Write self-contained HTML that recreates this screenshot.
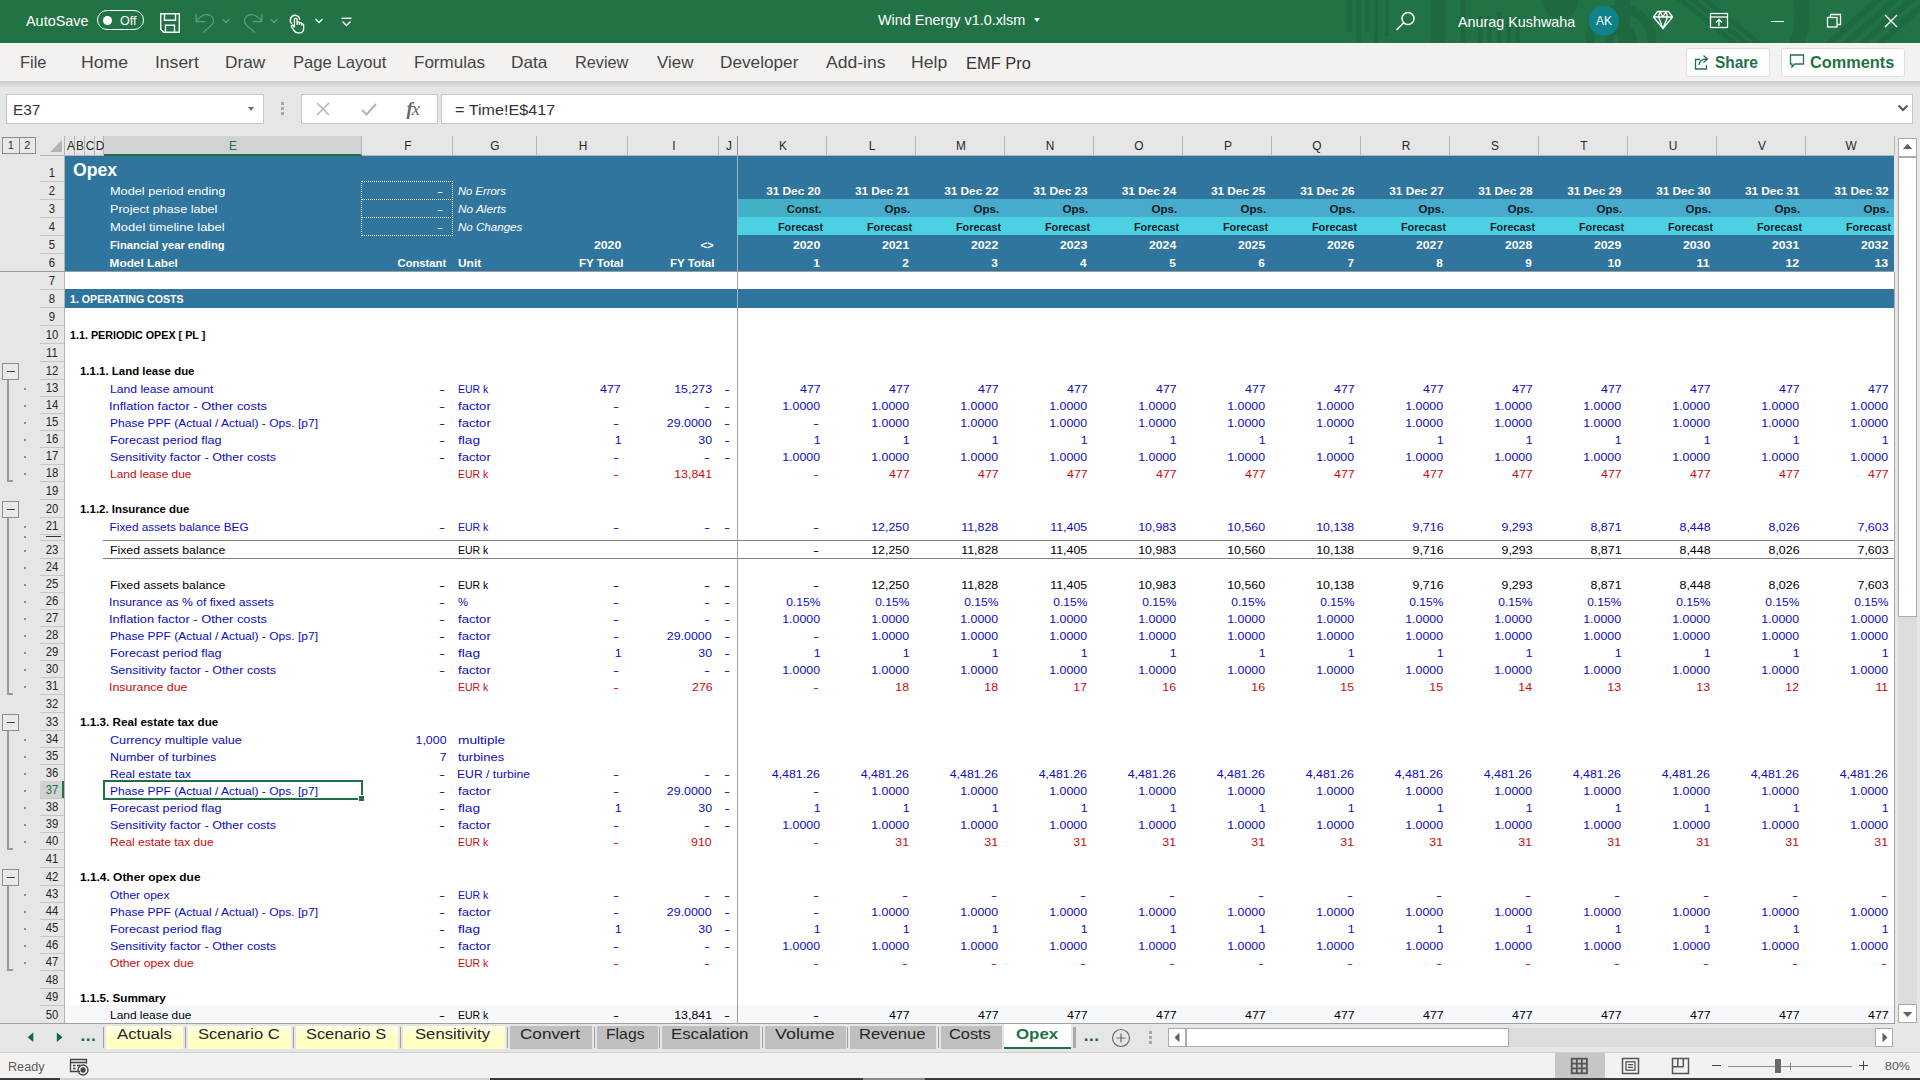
<!DOCTYPE html>
<html lang="en"><head><meta charset="utf-8"><title>Wind Energy v1.0.xlsm - Excel</title>
<style>
*{margin:0;padding:0}
html,body{width:1920px;height:1080px;overflow:hidden;background:#e6e6e6}
body{position:relative;font-family:"Liberation Sans","DejaVu Sans",sans-serif;color:#000}
body div,body span,body svg{position:absolute}
.t{font-size:11.8px;white-space:nowrap;height:17px;line-height:17px;margin-top:1.8px}
.l{transform-origin:0 50%}
.r{transform-origin:100% 50%}
.b{font-weight:bold}
.i{font-style:italic}
.title{font-size:18px;font-weight:bold;height:26px;line-height:26px;margin-top:.5px}
.ui{white-space:nowrap;transform-origin:0 50%}
.ch{top:137px;height:19px;line-height:19px;font-size:12.5px;color:#262626;text-align:center;transform:scaleX(.95)}
.rh{left:40px;width:24px;text-align:center;font-size:12.3px;line-height:17px;color:#262626;overflow:hidden;transform:scaleX(.92)}
.r1{top:156px}.r2{top:181px}.r3{top:199px}.r4{top:217px}.r5{top:235px}.r6{top:253px}.r7{top:271px}.r8{top:289px}.r9{top:307px}.r10{top:325px}.r11{top:343px}.r12{top:361px}.r13{top:379px}.r14{top:396px}.r15{top:413px}.r16{top:430px}.r17{top:447px}.r18{top:464px}.r19{top:481px}.r20{top:499px}.r21{top:517px}.r22{top:534px}.r23{top:540px}.r24{top:558px}.r25{top:575px}.r26{top:592px}.r27{top:609px}.r28{top:626px}.r29{top:643px}.r30{top:660px}.r31{top:677px}.r32{top:694px}.r33{top:712px}.r34{top:730px}.r35{top:747px}.r36{top:764px}.r37{top:781px}.r38{top:798px}.r39{top:815px}.r40{top:832px}.r41{top:849px}.r42{top:867px}.r43{top:885px}.r44{top:902px}.r45{top:919px}.r46{top:936px}.r47{top:953px}.r48{top:970px}.r49{top:988px}.r50{top:1005px}.x89{transform:scaleX(0.89)}.x90{transform:scaleX(0.9)}.x91{transform:scaleX(0.91)}.x92{transform:scaleX(0.92)}.x95{transform:scaleX(0.95)}.x97{transform:scaleX(0.97)}.x98{transform:scaleX(0.98)}.x99{transform:scaleX(0.99)}.x100{transform:scaleX(1)}.x101{transform:scaleX(1.01)}.x102{transform:scaleX(1.02)}.x103{transform:scaleX(1.03)}.x104{transform:scaleX(1.04)}.x105{transform:scaleX(1.05)}.x106{transform:scaleX(1.06)}.x107{transform:scaleX(1.07)}.x108{transform:scaleX(1.08)}.x109{transform:scaleX(1.09)}.x110{transform:scaleX(1.1)}.x111{transform:scaleX(1.11)}.x116{transform:scaleX(1.16)}.x153{transform:scaleX(1.53)}.cb{color:#0c0cc0}.cr{color:#c60c0c}.ck{color:#000}.cw{color:#fff}.cd{color:#0c1c24}
</style></head><body>
<!-- title bar -->
<div id="titlebar" style="left:0;top:0;width:1920px;height:42.5px;background:#217346"></div>
<svg style="left:1330px;top:0" width="590" height="42.5" viewBox="1330 0 590 42.5">
<g fill="#1e6940">
<rect x="1347.300" y="0" width="4.700" height="32"/><rect x="1356.700" y="0" width="4.300" height="42.5"/><rect x="1365" y="0" width="5" height="32"/><rect x="1374" y="0" width="4" height="42.5"/><rect x="1385" y="0" width="3.800" height="36"/>
<rect x="1431" y="0" width="14" height="42.5"/><rect x="1460.500" y="0" width="5" height="42.5"/>
<rect x="1478" y="16" width="4.500" height="26.500"/><rect x="1487" y="16" width="4.500" height="26.500"/><rect x="1497" y="12" width="4.500" height="30.500"/><rect x="1506.500" y="16" width="4.500" height="26.500"/><rect x="1515.500" y="16" width="4.500" height="26.500"/>
<path d="M1543 0a17.500 19 0 0 0 35 0z"/>
</g>
<g fill="none" stroke="#1e6940">
<circle cx="1621" cy="40" r="12" stroke-width="8"/><circle cx="1621" cy="40" r="31" stroke-width="9"/>
<path d="M1676 -4l62 50M1688 -4l62 50M1700 -4l62 50" stroke-width="5"/>
<circle cx="1712" cy="14" r="90" stroke-width="15"/>
<path d="M1826 46l56 -50M1843 46l56 -50M1860 46l56 -50M1877 46l56 -50" stroke-width="6"/>
</g></svg>
<span class="ui" style="left:26.3px;top:10.45px;height:22.5px;line-height:22.5px;font-size:15px;color:#fff;transform:scaleX(0.961);">AutoSave</span>
<div style="left:97px;top:10px;width:47px;height:20px;border:1px solid #fff;border-radius:10.5px;box-sizing:border-box"></div>
<div style="left:102.5px;top:15.5px;width:9px;height:9px;border-radius:5px;background:#fff"></div>
<span class="ui" style="left:120px;top:10.7px;height:20px;line-height:20px;font-size:12.5px;color:#fff">Off</span>
<svg style="left:159px;top:12px" width="22" height="22" viewBox="0 0 22 22" fill="none" stroke="#fff" stroke-width="1.4"><path d="M1.7 1.7h18.6v18.6H4.7l-3-3z"/><path d="M5.5 1.7v6.5h11V1.7"/><path d="M6.5 20.3v-7h9v7"/></svg>
<svg style="left:194px;top:11px" width="22" height="24" viewBox="0 0 22 24" fill="none" stroke="#56a07a" stroke-width="1.300"><path d="M2.200 2.800v7.800h9"/><path d="M2.600 10.200C5 6 10 2.600 15 4c4 1.400 5.400 5 4 8-1.200 2.600-6 6-10 9.400"/></svg>
<svg style="left:221px;top:17px" width="10" height="8" viewBox="0 0 10 8" fill="none" stroke="#56a07a" stroke-width="1.300"><path d="M1.500 2l3.500 3.500L8.500 2"/></svg>
<svg style="left:241.600px;top:11px" width="22" height="24" viewBox="0 0 22 24" fill="none" stroke="#56a07a" stroke-width="1.300"><path d="M19.800 2.800v7.800h-9"/><path d="M19.400 10.200C17 6 12 2.600 7 4c-4 1.400-5.400 5-4 8 1.200 2.600 6 6 10 9.400"/></svg>
<svg style="left:269px;top:17px" width="10" height="8" viewBox="0 0 10 8" fill="none" stroke="#56a07a" stroke-width="1.300"><path d="M1.500 2l3.500 3.500L8.500 2"/></svg>
<svg style="left:287.5px;top:11.5px" width="17.6" height="22.9" viewBox="0 0 20 26" fill="none" stroke="#fff" stroke-width="1.5"><path d="M4.500 13.500C2.800 12 2.200 9.500 3 7.300 4 4.800 6.500 3.300 9 3.800c2.600.5 4.300 2.700 4.300 5.200"/><path d="M7.300 17V8.500c0-2.200 3-2.200 3 0v6.300m0-2.300c0-1.800 2.700-1.800 2.700 0v2.300m0-1.500c0-1.700 2.600-1.500 2.600.2v2m0-1c0-1.500 2.200-1.300 2.200.3v4c0 3-2 5-5 5h-1.500c-2.500 0-3.500-1-4.800-3.200L4 17c-.8-1.600 1.300-2.600 2.200-1.200l1.100 1.800"/></svg>
<svg style="left:314px;top:17px" width="10" height="8" viewBox="0 0 10 8" fill="none" stroke="#fff" stroke-width="1.400"><path d="M1.500 2l3.500 3.500L8.500 2"/></svg>
<svg style="left:340px;top:15px" width="13" height="12" viewBox="0 0 13 12" fill="none" stroke="#fff" stroke-width="1.400"><path d="M1.500 3.300h10"/><path d="M2.500 6.500l4 4 4-4"/></svg>
<span class="ui" style="left:878.18px;top:9.45px;height:22.5px;line-height:22.5px;font-size:15px;color:#fff;transform:scaleX(0.96);">Wind Energy v1.0.xlsm</span>
<div style="left:1034.3px;top:18.2px;width:0;height:0;border-left:3.4px solid transparent;border-right:3.4px solid transparent;border-top:4px solid #fff"></div>
<svg style="left:1395px;top:10px" width="22" height="22" viewBox="0 0 22 22" fill="none" stroke="#fff" stroke-width="1.500"><circle cx="13" cy="8.500" r="6"/><path d="M8.700 12.800L1.500 20"/></svg>
<span class="ui" style="left:1458.3px;top:10.95px;height:22.5px;line-height:22.5px;font-size:15px;color:#fff;transform:scaleX(0.956);">Anurag Kushwaha</span>
<div style="left:1589px;top:6px;width:30px;height:30px;border-radius:15px;background:#0f828c"></div>
<span class="ui" style="left:1589px;top:6px;width:30px;height:30px;line-height:31px;text-align:center;font-size:12px;color:#fff;transform-origin:50% 50%">AK</span>
<svg style="left:1652px;top:9px" width="22" height="22" viewBox="0 0 22 22" fill="none" stroke="#fff" stroke-width="1.300" stroke-linejoin="round"><path d="M5.500 2.500h11l4 5.500-9.500 11.500L1.500 8z"/><path d="M1.500 8h19M8 2.500L6.500 8 11 19.500 15.500 8 14 2.500M8 2.500L11 8l3-5.500"/></svg>
<svg style="left:1709px;top:12px" width="20" height="18" viewBox="0 0 20 18" fill="none" stroke="#fff" stroke-width="1.300"><rect x="1.500" y="1.500" width="17" height="14"/><path d="M1.500 5h17"/><path d="M10 14V8M7 10.500l3-3 3 3"/></svg>
<div style="left:1770.5px;top:20.5px;width:13px;height:1.4px;background:#fff"></div>
<svg style="left:1826px;top:13px" width="16" height="16" viewBox="0 0 16 16" fill="none" stroke="#fff" stroke-width="1.300"><rect x="1.500" y="4.500" width="9.500" height="9.500"/><path d="M4.500 4.500v-3h10v10h-3.500"/></svg>
<svg style="left:1884px;top:14px" width="14" height="14" viewBox="0 0 14 14" fill="none" stroke="#fff" stroke-width="1.400"><path d="M1 1l12 12M13 1L1 13"/></svg>
<!-- ribbon tabs -->
<div style="left:0;top:42.5px;width:1920px;height:38.5px;background:#f3f2f1"></div>
<div style="left:0;top:81px;width:1920px;height:7px;background:linear-gradient(#cdcdcd,#e6e6e6)"></div>
<span class="ui" style="left:19.83px;top:50.3px;height:24.8px;line-height:24.8px;font-size:16.5px;color:#444;transform:scaleX(0.996);">File</span>
<span class="ui" style="left:81.03px;top:50.3px;height:24.8px;line-height:24.8px;font-size:16.5px;color:#444;transform:scaleX(1.071);">Home</span>
<span class="ui" style="left:154.61px;top:50.3px;height:24.8px;line-height:24.8px;font-size:16.5px;color:#444;transform:scaleX(1.062);">Insert</span>
<span class="ui" style="left:224.76px;top:50.3px;height:24.8px;line-height:24.8px;font-size:16.5px;color:#444;transform:scaleX(1.047);">Draw</span>
<span class="ui" style="left:293.11px;top:50.3px;height:24.8px;line-height:24.8px;font-size:16.5px;color:#444;transform:scaleX(1.008);">Page Layout</span>
<span class="ui" style="left:414.08px;top:50.3px;height:24.8px;line-height:24.8px;font-size:16.5px;color:#444;transform:scaleX(1.031);">Formulas</span>
<span class="ui" style="left:510.86px;top:50.3px;height:24.8px;line-height:24.8px;font-size:16.5px;color:#444;transform:scaleX(1.045);">Data</span>
<span class="ui" style="left:574.94px;top:50.3px;height:24.8px;line-height:24.8px;font-size:16.5px;color:#444;transform:scaleX(0.986);">Review</span>
<span class="ui" style="left:656.87px;top:50.3px;height:24.8px;line-height:24.8px;font-size:16.5px;color:#444;transform:scaleX(1.026);">View</span>
<span class="ui" style="left:719.87px;top:50.3px;height:24.8px;line-height:24.8px;font-size:16.5px;color:#444;transform:scaleX(1.042);">Developer</span>
<span class="ui" style="left:826.3px;top:50.3px;height:24.8px;line-height:24.8px;font-size:16.5px;color:#444;transform:scaleX(1.065);">Add-ins</span>
<span class="ui" style="left:910.83px;top:50.3px;height:24.8px;line-height:24.8px;font-size:16.5px;color:#444;transform:scaleX(1.067);">Help</span>
<span class="ui" style="left:965.93px;top:51.1px;height:24.8px;line-height:24.8px;font-size:16.5px;color:#333;transform:scaleX(0.995);">EMF Pro</span>
<div style="left:1685.5px;top:47.5px;width:84px;height:29px;background:#fff;border:1px solid #e1dfdd;border-radius:3px;box-sizing:border-box"></div>
<div style="left:1780.5px;top:47.5px;width:124px;height:29px;background:#fff;border:1px solid #e1dfdd;border-radius:3px;box-sizing:border-box"></div>
<svg style="left:1693px;top:53px" width="18" height="18" viewBox="0 0 18 18" fill="none" stroke="#217346" stroke-width="1.300"><path d="M7 6.500H2.500v9.500h11V12"/><path d="M6 12c.5-4 3.500-6 7.500-6M10.500 2.500L14.500 6l-4 3.500"/></svg>
<span class="ui" style="left:1715.02px;top:50.7px;height:24.0px;line-height:24.0px;font-size:16px;font-weight:bold;color:#217346;transform:scaleX(0.966);">Share</span>
<svg style="left:1789px;top:53px" width="17" height="17" viewBox="0 0 17 17" fill="none" stroke="#217346" stroke-width="1.300"><path d="M1.500 2h13v9h-8.500l-3 3v-3H1.500z"/></svg>
<span class="ui" style="left:1809.66px;top:50.7px;height:24.0px;line-height:24.0px;font-size:16px;font-weight:bold;color:#217346;transform:scaleX(1.02);">Comments</span>
<!-- formula bar -->
<div style="left:6px;top:94px;width:258px;height:30px;background:#fff;border:1px solid #c6c6c6;box-sizing:border-box"></div>
<span class="ui" style="left:12.52px;top:98.65px;height:22.5px;line-height:22.5px;font-size:15px;color:#333;transform:scaleX(1.026);">E37</span>
<div style="left:247.700px;top:107px;width:0;height:0;border-left:3.800px solid transparent;border-right:3.800px solid transparent;border-top:4.500px solid #6e6e6e"></div>
<div style="left:281px;top:102px;width:2.500px;height:2.500px;background:#a6a6a6"></div>
<div style="left:281px;top:107px;width:2.500px;height:2.500px;background:#a6a6a6"></div>
<div style="left:281px;top:112px;width:2.500px;height:2.500px;background:#a6a6a6"></div>
<div style="left:301px;top:94px;width:137px;height:30px;background:#fff;border:1px solid #c6c6c6;box-sizing:border-box"></div>
<svg style="left:315px;top:101px" width="16" height="16" viewBox="0 0 16 16" fill="none" stroke="#b4b4b4" stroke-width="1.500"><path d="M2 2l12 12M14 2L2 14"/></svg>
<svg style="left:360px;top:101px" width="18" height="16" viewBox="0 0 18 16" fill="none" stroke="#b4b4b4" stroke-width="2"><path d="M2 9l4.500 4.500L16 3"/></svg>
<span class="ui" style="left:406.5px;top:94.5px;height:29px;line-height:28px;font-size:18.5px;font-style:italic;font-family:'Liberation Serif','DejaVu Serif',serif;color:#666;letter-spacing:-1px"><b>f</b>x</span>
<div style="left:441px;top:94px;width:1472px;height:30px;background:#fff;border:1px solid #c6c6c6;box-sizing:border-box"></div>
<span class="ui" style="left:455.19px;top:98.65px;height:22.5px;line-height:22.5px;font-size:15px;color:#333;transform:scaleX(1.077);">= Time!E$417</span>
<svg style="left:1897px;top:103px" width="12" height="10" viewBox="0 0 12 10" fill="none" stroke="#555" stroke-width="2"><path d="M1.500 2.500L6 7l4.500-4.500"/></svg>
<!-- grid white -->
<div style="left:65px;top:156px;width:1829px;height:867px;background:#fff"></div>
<div style="left:2px;top:137px;width:17.5px;height:17px;border:1px solid #8c8c8c;box-sizing:border-box;background:#e9e9e9"></div>
<span class="ui" style="left:2px;top:137px;width:17.5px;height:17px;line-height:17.5px;text-align:center;font-size:11px;color:#333;transform-origin:50% 50%">1</span>
<div style="left:18.5px;top:137px;width:17.5px;height:17px;border:1px solid #8c8c8c;box-sizing:border-box;background:#e9e9e9"></div>
<span class="ui" style="left:18.5px;top:137px;width:17.5px;height:17px;line-height:17.5px;text-align:center;font-size:11px;color:#333;transform-origin:50% 50%">2</span>
<div style="left:49.5px;top:140px;width:0;height:0;border-left:12px solid transparent;border-bottom:12px solid #b4b4b4"></div>
<div style="left:40px;top:155px;width:1854px;height:1px;background:#b4b4b4"></div>
<div style="left:74px;top:136px;width:1px;height:19px;background:#b4b4b4"></div>
<span class="ch" style="left:55.5px;width:30px;color:#262626">A</span>
<div style="left:84px;top:136px;width:1px;height:19px;background:#b4b4b4"></div>
<span class="ch" style="left:65.0px;width:30px;color:#262626">B</span>
<div style="left:94px;top:136px;width:1px;height:19px;background:#b4b4b4"></div>
<span class="ch" style="left:75.0px;width:30px;color:#262626">C</span>
<div style="left:103px;top:136px;width:1px;height:19px;background:#b4b4b4"></div>
<span class="ch" style="left:84.5px;width:30px;color:#262626">D</span>
<div style="left:104px;top:136px;width:258px;height:18px;background:#d2d2d2"></div>
<div style="left:104px;top:154px;width:258px;height:2px;background:#217346"></div>
<div style="left:361px;top:136px;width:1px;height:19px;background:#b4b4b4"></div>
<span class="ch" style="left:218.0px;width:30px;color:#217346">E</span>
<div style="left:452px;top:136px;width:1px;height:19px;background:#b4b4b4"></div>
<span class="ch" style="left:392.5px;width:30px;color:#262626">F</span>
<div style="left:536px;top:136px;width:1px;height:19px;background:#b4b4b4"></div>
<span class="ch" style="left:480.0px;width:30px;color:#262626">G</span>
<div style="left:627px;top:136px;width:1px;height:19px;background:#b4b4b4"></div>
<span class="ch" style="left:567.5px;width:30px;color:#262626">H</span>
<div style="left:718px;top:136px;width:1px;height:19px;background:#b4b4b4"></div>
<span class="ch" style="left:658.5px;width:30px;color:#262626">I</span>
<div style="left:737px;top:136px;width:1px;height:19px;background:#8c8c8c"></div>
<span class="ch" style="left:713.5px;width:30px;color:#262626">J</span>
<div style="left:826px;top:136px;width:1px;height:19px;background:#b4b4b4"></div>
<span class="ch" style="left:767.5px;width:30px;color:#262626">K</span>
<div style="left:915px;top:136px;width:1px;height:19px;background:#b4b4b4"></div>
<span class="ch" style="left:856.5px;width:30px;color:#262626">L</span>
<div style="left:1004px;top:136px;width:1px;height:19px;background:#b4b4b4"></div>
<span class="ch" style="left:945.5px;width:30px;color:#262626">M</span>
<div style="left:1093px;top:136px;width:1px;height:19px;background:#b4b4b4"></div>
<span class="ch" style="left:1034.5px;width:30px;color:#262626">N</span>
<div style="left:1182px;top:136px;width:1px;height:19px;background:#b4b4b4"></div>
<span class="ch" style="left:1123.5px;width:30px;color:#262626">O</span>
<div style="left:1271px;top:136px;width:1px;height:19px;background:#b4b4b4"></div>
<span class="ch" style="left:1212.5px;width:30px;color:#262626">P</span>
<div style="left:1360px;top:136px;width:1px;height:19px;background:#b4b4b4"></div>
<span class="ch" style="left:1301.5px;width:30px;color:#262626">Q</span>
<div style="left:1449px;top:136px;width:1px;height:19px;background:#b4b4b4"></div>
<span class="ch" style="left:1390.5px;width:30px;color:#262626">R</span>
<div style="left:1538px;top:136px;width:1px;height:19px;background:#b4b4b4"></div>
<span class="ch" style="left:1479.5px;width:30px;color:#262626">S</span>
<div style="left:1627px;top:136px;width:1px;height:19px;background:#b4b4b4"></div>
<span class="ch" style="left:1568.5px;width:30px;color:#262626">T</span>
<div style="left:1716px;top:136px;width:1px;height:19px;background:#b4b4b4"></div>
<span class="ch" style="left:1657.5px;width:30px;color:#262626">U</span>
<div style="left:1805px;top:136px;width:1px;height:19px;background:#b4b4b4"></div>
<span class="ch" style="left:1746.5px;width:30px;color:#262626">V</span>
<div style="left:1894px;top:136px;width:1px;height:19px;background:#b4b4b4"></div>
<span class="ch" style="left:1835.5px;width:30px;color:#262626">W</span>
<div style="left:64px;top:136px;width:1px;height:19px;background:#b4b4b4"></div>
<div style="left:64px;top:156px;width:1px;height:867px;background:#b4b4b4"></div>
<div style="left:40px;top:181px;width:24px;height:1px;background:#c6c6c6"></div>
<span class="rh" style="top:164.7px;height:17px;color:#262626">1</span>
<div style="left:40px;top:199px;width:24px;height:1px;background:#c6c6c6"></div>
<span class="rh" style="top:182.7px;height:17px;color:#262626">2</span>
<div style="left:40px;top:217px;width:24px;height:1px;background:#c6c6c6"></div>
<span class="rh" style="top:200.7px;height:17px;color:#262626">3</span>
<div style="left:40px;top:235px;width:24px;height:1px;background:#c6c6c6"></div>
<span class="rh" style="top:218.7px;height:17px;color:#262626">4</span>
<div style="left:40px;top:253px;width:24px;height:1px;background:#c6c6c6"></div>
<span class="rh" style="top:236.7px;height:17px;color:#262626">5</span>
<div style="left:40px;top:271px;width:24px;height:1px;background:#c6c6c6"></div>
<span class="rh" style="top:254.7px;height:17px;color:#262626">6</span>
<div style="left:40px;top:289px;width:24px;height:1px;background:#c6c6c6"></div>
<span class="rh" style="top:272.7px;height:17px;color:#262626">7</span>
<div style="left:40px;top:307px;width:24px;height:1px;background:#c6c6c6"></div>
<span class="rh" style="top:290.7px;height:17px;color:#262626">8</span>
<div style="left:40px;top:325px;width:24px;height:1px;background:#c6c6c6"></div>
<span class="rh" style="top:308.7px;height:17px;color:#262626">9</span>
<div style="left:40px;top:343px;width:24px;height:1px;background:#c6c6c6"></div>
<span class="rh" style="top:326.7px;height:17px;color:#262626">10</span>
<div style="left:40px;top:361px;width:24px;height:1px;background:#c6c6c6"></div>
<span class="rh" style="top:344.7px;height:17px;color:#262626">11</span>
<div style="left:40px;top:379px;width:24px;height:1px;background:#c6c6c6"></div>
<span class="rh" style="top:362.7px;height:17px;color:#262626">12</span>
<div style="left:40px;top:396px;width:24px;height:1px;background:#c6c6c6"></div>
<span class="rh" style="top:379.7px;height:17px;color:#262626">13</span>
<div style="left:40px;top:413px;width:24px;height:1px;background:#c6c6c6"></div>
<span class="rh" style="top:396.7px;height:17px;color:#262626">14</span>
<div style="left:40px;top:430px;width:24px;height:1px;background:#c6c6c6"></div>
<span class="rh" style="top:413.7px;height:17px;color:#262626">15</span>
<div style="left:40px;top:447px;width:24px;height:1px;background:#c6c6c6"></div>
<span class="rh" style="top:430.7px;height:17px;color:#262626">16</span>
<div style="left:40px;top:464px;width:24px;height:1px;background:#c6c6c6"></div>
<span class="rh" style="top:447.7px;height:17px;color:#262626">17</span>
<div style="left:40px;top:481px;width:24px;height:1px;background:#c6c6c6"></div>
<span class="rh" style="top:464.7px;height:17px;color:#262626">18</span>
<div style="left:40px;top:499px;width:24px;height:1px;background:#c6c6c6"></div>
<span class="rh" style="top:482.7px;height:17px;color:#262626">19</span>
<div style="left:40px;top:517px;width:24px;height:1px;background:#c6c6c6"></div>
<span class="rh" style="top:500.7px;height:17px;color:#262626">20</span>
<div style="left:40px;top:534px;width:24px;height:1px;background:#c6c6c6"></div>
<span class="rh" style="top:517.7px;height:17px;color:#262626">21</span>
<div style="left:40px;top:540px;width:24px;height:1px;background:#c6c6c6"></div>
<div style="left:46px;top:535.5px;width:15px;height:1.5px;background:#333"></div>
<div style="left:40px;top:558px;width:24px;height:1px;background:#c6c6c6"></div>
<span class="rh" style="top:541.7px;height:17px;color:#262626">23</span>
<div style="left:40px;top:575px;width:24px;height:1px;background:#c6c6c6"></div>
<span class="rh" style="top:558.7px;height:17px;color:#262626">24</span>
<div style="left:40px;top:592px;width:24px;height:1px;background:#c6c6c6"></div>
<span class="rh" style="top:575.7px;height:17px;color:#262626">25</span>
<div style="left:40px;top:609px;width:24px;height:1px;background:#c6c6c6"></div>
<span class="rh" style="top:592.7px;height:17px;color:#262626">26</span>
<div style="left:40px;top:626px;width:24px;height:1px;background:#c6c6c6"></div>
<span class="rh" style="top:609.7px;height:17px;color:#262626">27</span>
<div style="left:40px;top:643px;width:24px;height:1px;background:#c6c6c6"></div>
<span class="rh" style="top:626.7px;height:17px;color:#262626">28</span>
<div style="left:40px;top:660px;width:24px;height:1px;background:#c6c6c6"></div>
<span class="rh" style="top:643.7px;height:17px;color:#262626">29</span>
<div style="left:40px;top:677px;width:24px;height:1px;background:#c6c6c6"></div>
<span class="rh" style="top:660.7px;height:17px;color:#262626">30</span>
<div style="left:40px;top:694px;width:24px;height:1px;background:#c6c6c6"></div>
<span class="rh" style="top:677.7px;height:17px;color:#262626">31</span>
<div style="left:40px;top:712px;width:24px;height:1px;background:#c6c6c6"></div>
<span class="rh" style="top:695.7px;height:17px;color:#262626">32</span>
<div style="left:40px;top:730px;width:24px;height:1px;background:#c6c6c6"></div>
<span class="rh" style="top:713.7px;height:17px;color:#262626">33</span>
<div style="left:40px;top:747px;width:24px;height:1px;background:#c6c6c6"></div>
<span class="rh" style="top:730.7px;height:17px;color:#262626">34</span>
<div style="left:40px;top:764px;width:24px;height:1px;background:#c6c6c6"></div>
<span class="rh" style="top:747.7px;height:17px;color:#262626">35</span>
<div style="left:40px;top:781px;width:24px;height:1px;background:#c6c6c6"></div>
<span class="rh" style="top:764.7px;height:17px;color:#262626">36</span>
<div style="left:40px;top:781px;width:22px;height:17px;background:#d2d2d2"></div>
<div style="left:62px;top:781px;width:2px;height:18px;background:#217346"></div>
<div style="left:40px;top:798px;width:24px;height:1px;background:#c6c6c6"></div>
<span class="rh" style="top:781.7px;height:17px;color:#217346">37</span>
<div style="left:40px;top:815px;width:24px;height:1px;background:#c6c6c6"></div>
<span class="rh" style="top:798.7px;height:17px;color:#262626">38</span>
<div style="left:40px;top:832px;width:24px;height:1px;background:#c6c6c6"></div>
<span class="rh" style="top:815.7px;height:17px;color:#262626">39</span>
<div style="left:40px;top:849px;width:24px;height:1px;background:#c6c6c6"></div>
<span class="rh" style="top:832.7px;height:17px;color:#262626">40</span>
<div style="left:40px;top:867px;width:24px;height:1px;background:#c6c6c6"></div>
<span class="rh" style="top:850.7px;height:17px;color:#262626">41</span>
<div style="left:40px;top:885px;width:24px;height:1px;background:#c6c6c6"></div>
<span class="rh" style="top:868.7px;height:17px;color:#262626">42</span>
<div style="left:40px;top:902px;width:24px;height:1px;background:#c6c6c6"></div>
<span class="rh" style="top:885.7px;height:17px;color:#262626">43</span>
<div style="left:40px;top:919px;width:24px;height:1px;background:#c6c6c6"></div>
<span class="rh" style="top:902.7px;height:17px;color:#262626">44</span>
<div style="left:40px;top:936px;width:24px;height:1px;background:#c6c6c6"></div>
<span class="rh" style="top:919.7px;height:17px;color:#262626">45</span>
<div style="left:40px;top:953px;width:24px;height:1px;background:#c6c6c6"></div>
<span class="rh" style="top:936.7px;height:17px;color:#262626">46</span>
<div style="left:40px;top:970px;width:24px;height:1px;background:#c6c6c6"></div>
<span class="rh" style="top:953.7px;height:17px;color:#262626">47</span>
<div style="left:40px;top:988px;width:24px;height:1px;background:#c6c6c6"></div>
<span class="rh" style="top:971.7px;height:17px;color:#262626">48</span>
<div style="left:40px;top:1005px;width:24px;height:1px;background:#c6c6c6"></div>
<span class="rh" style="top:988.7px;height:17px;color:#262626">49</span>
<span class="rh" style="top:1006.7px;height:16.299999999999955px;color:#262626">50</span>
<div style="left:6.7px;top:379px;width:2px;height:102.5px;background:#9a9a9a"></div>
<div style="left:6.7px;top:479.5px;width:6.5px;height:2px;background:#9a9a9a"></div>
<div style="left:2px;top:363.2px;width:17px;height:16.5px;border:1px solid #8c8c8c;box-sizing:border-box;background:#e9e9e9"></div>
<div style="left:6.5px;top:370.9px;width:8.5px;height:1.6px;background:#444"></div>
<div style="left:24px;top:387.5px;width:2px;height:2px;background:#8c8c8c"></div>
<div style="left:24px;top:404.5px;width:2px;height:2px;background:#8c8c8c"></div>
<div style="left:24px;top:421.5px;width:2px;height:2px;background:#8c8c8c"></div>
<div style="left:24px;top:438.5px;width:2px;height:2px;background:#8c8c8c"></div>
<div style="left:24px;top:455.5px;width:2px;height:2px;background:#8c8c8c"></div>
<div style="left:24px;top:472.5px;width:2px;height:2px;background:#8c8c8c"></div>
<div style="left:6.7px;top:517px;width:2px;height:177.5px;background:#9a9a9a"></div>
<div style="left:6.7px;top:692.5px;width:6.5px;height:2px;background:#9a9a9a"></div>
<div style="left:2px;top:501.2px;width:17px;height:16.5px;border:1px solid #8c8c8c;box-sizing:border-box;background:#e9e9e9"></div>
<div style="left:6.5px;top:508.9px;width:8.5px;height:1.6px;background:#444"></div>
<div style="left:24px;top:525.5px;width:2px;height:2px;background:#8c8c8c"></div>
<div style="left:24px;top:536px;width:2px;height:2px;background:#8c8c8c"></div>
<div style="left:24px;top:549.5px;width:2px;height:2px;background:#8c8c8c"></div>
<div style="left:24px;top:566.5px;width:2px;height:2px;background:#8c8c8c"></div>
<div style="left:24px;top:583.5px;width:2px;height:2px;background:#8c8c8c"></div>
<div style="left:24px;top:600.5px;width:2px;height:2px;background:#8c8c8c"></div>
<div style="left:24px;top:617.5px;width:2px;height:2px;background:#8c8c8c"></div>
<div style="left:24px;top:634.5px;width:2px;height:2px;background:#8c8c8c"></div>
<div style="left:24px;top:651.5px;width:2px;height:2px;background:#8c8c8c"></div>
<div style="left:24px;top:668.5px;width:2px;height:2px;background:#8c8c8c"></div>
<div style="left:24px;top:685.5px;width:2px;height:2px;background:#8c8c8c"></div>
<div style="left:6.7px;top:730px;width:2px;height:119.5px;background:#9a9a9a"></div>
<div style="left:6.7px;top:847.5px;width:6.5px;height:2px;background:#9a9a9a"></div>
<div style="left:2px;top:714.2px;width:17px;height:16.5px;border:1px solid #8c8c8c;box-sizing:border-box;background:#e9e9e9"></div>
<div style="left:6.5px;top:721.9px;width:8.5px;height:1.6px;background:#444"></div>
<div style="left:24px;top:738.5px;width:2px;height:2px;background:#8c8c8c"></div>
<div style="left:24px;top:755.5px;width:2px;height:2px;background:#8c8c8c"></div>
<div style="left:24px;top:772.5px;width:2px;height:2px;background:#8c8c8c"></div>
<div style="left:24px;top:789.5px;width:2px;height:2px;background:#8c8c8c"></div>
<div style="left:24px;top:806.5px;width:2px;height:2px;background:#8c8c8c"></div>
<div style="left:24px;top:823.5px;width:2px;height:2px;background:#8c8c8c"></div>
<div style="left:24px;top:840.5px;width:2px;height:2px;background:#8c8c8c"></div>
<div style="left:6.7px;top:885px;width:2px;height:85.5px;background:#9a9a9a"></div>
<div style="left:6.7px;top:968.5px;width:6.5px;height:2px;background:#9a9a9a"></div>
<div style="left:2px;top:869.2px;width:17px;height:16.5px;border:1px solid #8c8c8c;box-sizing:border-box;background:#e9e9e9"></div>
<div style="left:6.5px;top:876.9px;width:8.5px;height:1.6px;background:#444"></div>
<div style="left:24px;top:893.5px;width:2px;height:2px;background:#8c8c8c"></div>
<div style="left:24px;top:910.5px;width:2px;height:2px;background:#8c8c8c"></div>
<div style="left:24px;top:927.5px;width:2px;height:2px;background:#8c8c8c"></div>
<div style="left:24px;top:944.5px;width:2px;height:2px;background:#8c8c8c"></div>
<div style="left:24px;top:961.5px;width:2px;height:2px;background:#8c8c8c"></div>
<div style="left:65px;top:156px;width:1829px;height:116px;background:#2f759e;"></div>
<div style="left:65px;top:289px;width:1829px;height:19px;background:#2f759e;"></div>
<div style="left:737px;top:199px;width:89px;height:18px;background:#43b1c5;"></div>
<div style="left:826px;top:199px;width:1068px;height:18px;background:#46abcc;"></div>
<div style="left:737px;top:217px;width:1157px;height:18px;background:#4cd1e4;"></div>
<div style="left:65px;top:1005px;width:1829px;height:18px;background:#f7f8fc;"></div>
<span class="t l r1 cw title x98" style="left:72.9px">Opex</span>
<span class="t l r2 cw x108" style="left:109.5px">Model period ending</span>
<span class="t r r2 cw x153" style="right:1476.9px">-</span>
<span class="t l r2 cw i x95" style="left:458.0px">No Errors</span>
<span class="t l r3 cw x107" style="left:109.5px">Project phase label</span>
<span class="t r r3 cw x153" style="right:1476.9px">-</span>
<span class="t l r3 cw i x100" style="left:458.0px">No Alerts</span>
<span class="t l r4 cw x110" style="left:109.5px">Model timeline label</span>
<span class="t r r4 cw x153" style="right:1476.9px">-</span>
<span class="t l r4 cw i x98" style="left:458.0px">No Changes</span>
<span class="t l r5 cw b x95" style="left:109.7px">Financial year ending</span>
<span class="t r r5 cw b x104" style="right:1298.9px">2020</span>
<span class="t r r5 cw b x97" style="right:1206.3px">&lt;&gt;</span>
<span class="t l r6 cw b x100" style="left:109.6px">Model Label</span>
<span class="t r r6 cw b x95" style="right:1473.4px">Constant</span>
<span class="t l r6 cw b x101" style="left:457.6px">Unit</span>
<span class="t r r6 cw b x98" style="right:1296.9px">FY Total</span>
<span class="t r r6 cw b x98" style="right:1205.8px">FY Total</span>
<span class="t r r2 cw b x100" style="right:1099.4px">31 Dec 20</span>
<span class="t r r3 cd b x95" style="right:1098.2px">Const.</span>
<span class="t r r4 cd b x92" style="right:1096.8px">Forecast</span>
<span class="t r r5 cw b x104" style="right:1099.5px">2020</span>
<span class="t r r6 cw b x100" style="right:1100.3px">1</span>
<span class="t r r2 cw b x100" style="right:1010.6px">31 Dec 21</span>
<span class="t r r3 cd b x98" style="right:1009.3px">Ops.</span>
<span class="t r r4 cd b x92" style="right:1007.8px">Forecast</span>
<span class="t r r5 cw b x104" style="right:1010.6px">2021</span>
<span class="t r r6 cw b x100" style="right:1011.2px">2</span>
<span class="t r r2 cw b x100" style="right:921.4px">31 Dec 22</span>
<span class="t r r3 cd b x98" style="right:920.3px">Ops.</span>
<span class="t r r4 cd b x92" style="right:918.8px">Forecast</span>
<span class="t r r5 cw b x104" style="right:921.5px">2022</span>
<span class="t r r6 cw b x100" style="right:922.2px">3</span>
<span class="t r r2 cw b x100" style="right:832.4px">31 Dec 23</span>
<span class="t r r3 cd b x98" style="right:831.3px">Ops.</span>
<span class="t r r4 cd b x92" style="right:829.8px">Forecast</span>
<span class="t r r5 cw b x104" style="right:832.5px">2023</span>
<span class="t r r6 cw b x100" style="right:833.5px">4</span>
<span class="t r r2 cw b x100" style="right:743.8px">31 Dec 24</span>
<span class="t r r3 cd b x98" style="right:742.3px">Ops.</span>
<span class="t r r4 cd b x92" style="right:740.8px">Forecast</span>
<span class="t r r5 cw b x104" style="right:743.9px">2024</span>
<span class="t r r6 cw b x100" style="right:744.3px">5</span>
<span class="t r r2 cw b x100" style="right:654.6px">31 Dec 25</span>
<span class="t r r3 cd b x98" style="right:653.3px">Ops.</span>
<span class="t r r4 cd b x92" style="right:651.8px">Forecast</span>
<span class="t r r5 cw b x104" style="right:654.6px">2025</span>
<span class="t r r6 cw b x100" style="right:655.2px">6</span>
<span class="t r r2 cw b x100" style="right:565.4px">31 Dec 26</span>
<span class="t r r3 cd b x98" style="right:564.3px">Ops.</span>
<span class="t r r4 cd b x92" style="right:562.8px">Forecast</span>
<span class="t r r5 cw b x104" style="right:565.5px">2026</span>
<span class="t r r6 cw b x100" style="right:566.0px">7</span>
<span class="t r r2 cw b x100" style="right:476.3px">31 Dec 27</span>
<span class="t r r3 cd b x98" style="right:475.3px">Ops.</span>
<span class="t r r4 cd b x92" style="right:473.8px">Forecast</span>
<span class="t r r5 cw b x104" style="right:476.4px">2027</span>
<span class="t r r6 cw b x100" style="right:477.2px">8</span>
<span class="t r r2 cw b x100" style="right:387.4px">31 Dec 28</span>
<span class="t r r3 cd b x98" style="right:386.3px">Ops.</span>
<span class="t r r4 cd b x92" style="right:384.8px">Forecast</span>
<span class="t r r5 cw b x104" style="right:387.5px">2028</span>
<span class="t r r6 cw b x100" style="right:388.2px">9</span>
<span class="t r r2 cw b x100" style="right:298.4px">31 Dec 29</span>
<span class="t r r3 cd b x98" style="right:297.3px">Ops.</span>
<span class="t r r4 cd b x92" style="right:295.8px">Forecast</span>
<span class="t r r5 cw b x104" style="right:298.5px">2029</span>
<span class="t r r6 cw b x104" style="right:299.2px">10</span>
<span class="t r r2 cw b x100" style="right:209.4px">31 Dec 30</span>
<span class="t r r3 cd b x98" style="right:208.3px">Ops.</span>
<span class="t r r4 cd b x92" style="right:206.8px">Forecast</span>
<span class="t r r5 cw b x104" style="right:209.5px">2030</span>
<span class="t r r6 cw b x104" style="right:210.2px">11</span>
<span class="t r r2 cw b x100" style="right:120.6px">31 Dec 31</span>
<span class="t r r3 cd b x98" style="right:119.3px">Ops.</span>
<span class="t r r4 cd b x92" style="right:117.8px">Forecast</span>
<span class="t r r5 cw b x104" style="right:120.6px">2031</span>
<span class="t r r6 cw b x104" style="right:121.2px">12</span>
<span class="t r r2 cw b x100" style="right:31.4px">31 Dec 32</span>
<span class="t r r3 cd b x98" style="right:30.3px">Ops.</span>
<span class="t r r4 cd b x92" style="right:28.8px">Forecast</span>
<span class="t r r5 cw b x104" style="right:31.5px">2032</span>
<span class="t r r6 cw b x104" style="right:32.2px">13</span>
<span class="t l r8 cw b x90" style="left:69.9px">1. OPERATING COSTS</span>
<span class="t l r10 ck b x91" style="left:69.9px">1.1. PERIODIC OPEX [ PL ]</span>
<span class="t l r12 ck b x97" style="left:79.8px">1.1.1. Land lease due</span>
<span class="t l r13 cb x103" style="left:109.6px">Land lease amount</span>
<span class="t r r13 cb x153" style="right:1475.5px">-</span>
<span class="t l r13 cb x89" style="left:457.5px">EUR k</span>
<span class="t r r13 cb x105" style="right:1298.9px">477</span>
<span class="t r r13 cb x105" style="right:1207.8px">15,273</span>
<span class="t r r13 cb x153" style="right:1190.4px">-</span>
<span class="t r r13 cb x105" style="right:1099.6px">477</span>
<span class="t r r13 cb x105" style="right:1010.6px">477</span>
<span class="t r r13 cb x105" style="right:921.6px">477</span>
<span class="t r r13 cb x105" style="right:832.6px">477</span>
<span class="t r r13 cb x105" style="right:743.6px">477</span>
<span class="t r r13 cb x105" style="right:654.6px">477</span>
<span class="t r r13 cb x105" style="right:565.6px">477</span>
<span class="t r r13 cb x105" style="right:476.6px">477</span>
<span class="t r r13 cb x105" style="right:387.6px">477</span>
<span class="t r r13 cb x105" style="right:298.6px">477</span>
<span class="t r r13 cb x105" style="right:209.6px">477</span>
<span class="t r r13 cb x105" style="right:120.6px">477</span>
<span class="t r r13 cb x105" style="right:31.6px">477</span>
<span class="t l r14 cb x109" style="left:109.4px">Inflation factor - Other costs</span>
<span class="t r r14 cb x153" style="right:1475.5px">-</span>
<span class="t l r14 cb x111" style="left:458.3px">factor</span>
<span class="t r r14 cb x153" style="right:1300.8px">-</span>
<span class="t r r14 cb x153" style="right:1209.8px">-</span>
<span class="t r r14 cb x153" style="right:1190.4px">-</span>
<span class="t r r14 cb x105" style="right:1099.7px">1.0000</span>
<span class="t r r14 cb x105" style="right:1010.7px">1.0000</span>
<span class="t r r14 cb x105" style="right:921.7px">1.0000</span>
<span class="t r r14 cb x105" style="right:832.7px">1.0000</span>
<span class="t r r14 cb x105" style="right:743.7px">1.0000</span>
<span class="t r r14 cb x105" style="right:654.7px">1.0000</span>
<span class="t r r14 cb x105" style="right:565.7px">1.0000</span>
<span class="t r r14 cb x105" style="right:476.7px">1.0000</span>
<span class="t r r14 cb x105" style="right:387.7px">1.0000</span>
<span class="t r r14 cb x105" style="right:298.7px">1.0000</span>
<span class="t r r14 cb x105" style="right:209.7px">1.0000</span>
<span class="t r r14 cb x105" style="right:120.7px">1.0000</span>
<span class="t r r14 cb x105" style="right:31.7px">1.0000</span>
<span class="t l r15 cb x102" style="left:109.6px">Phase PPF (Actual / Actual) - Ops. [p7]</span>
<span class="t r r15 cb x153" style="right:1475.5px">-</span>
<span class="t l r15 cb x111" style="left:458.3px">factor</span>
<span class="t r r15 cb x153" style="right:1300.8px">-</span>
<span class="t r r15 cb x105" style="right:1208.0px">29.0000</span>
<span class="t r r15 cb x153" style="right:1190.4px">-</span>
<span class="t r r15 cb x153" style="right:1101.0px">-</span>
<span class="t r r15 cb x105" style="right:1010.7px">1.0000</span>
<span class="t r r15 cb x105" style="right:921.7px">1.0000</span>
<span class="t r r15 cb x105" style="right:832.7px">1.0000</span>
<span class="t r r15 cb x105" style="right:743.7px">1.0000</span>
<span class="t r r15 cb x105" style="right:654.7px">1.0000</span>
<span class="t r r15 cb x105" style="right:565.7px">1.0000</span>
<span class="t r r15 cb x105" style="right:476.7px">1.0000</span>
<span class="t r r15 cb x105" style="right:387.7px">1.0000</span>
<span class="t r r15 cb x105" style="right:298.7px">1.0000</span>
<span class="t r r15 cb x105" style="right:209.7px">1.0000</span>
<span class="t r r15 cb x105" style="right:120.7px">1.0000</span>
<span class="t r r15 cb x105" style="right:31.7px">1.0000</span>
<span class="t l r16 cb x107" style="left:109.5px">Forecast period flag</span>
<span class="t r r16 cb x153" style="right:1475.5px">-</span>
<span class="t l r16 cb x116" style="left:458.3px">flag</span>
<span class="t r r16 cb x105" style="right:1298.9px">1</span>
<span class="t r r16 cb x105" style="right:1208.0px">30</span>
<span class="t r r16 cb x153" style="right:1190.4px">-</span>
<span class="t r r16 cb x105" style="right:1099.6px">1</span>
<span class="t r r16 cb x105" style="right:1010.6px">1</span>
<span class="t r r16 cb x105" style="right:921.6px">1</span>
<span class="t r r16 cb x105" style="right:832.6px">1</span>
<span class="t r r16 cb x105" style="right:743.6px">1</span>
<span class="t r r16 cb x105" style="right:654.6px">1</span>
<span class="t r r16 cb x105" style="right:565.6px">1</span>
<span class="t r r16 cb x105" style="right:476.6px">1</span>
<span class="t r r16 cb x105" style="right:387.6px">1</span>
<span class="t r r16 cb x105" style="right:298.6px">1</span>
<span class="t r r16 cb x105" style="right:209.6px">1</span>
<span class="t r r16 cb x105" style="right:120.6px">1</span>
<span class="t r r16 cb x105" style="right:31.6px">1</span>
<span class="t l r17 cb x106" style="left:110.1px">Sensitivity factor - Other costs</span>
<span class="t r r17 cb x153" style="right:1475.5px">-</span>
<span class="t l r17 cb x111" style="left:458.3px">factor</span>
<span class="t r r17 cb x153" style="right:1300.8px">-</span>
<span class="t r r17 cb x153" style="right:1209.8px">-</span>
<span class="t r r17 cb x153" style="right:1190.4px">-</span>
<span class="t r r17 cb x105" style="right:1099.7px">1.0000</span>
<span class="t r r17 cb x105" style="right:1010.7px">1.0000</span>
<span class="t r r17 cb x105" style="right:921.7px">1.0000</span>
<span class="t r r17 cb x105" style="right:832.7px">1.0000</span>
<span class="t r r17 cb x105" style="right:743.7px">1.0000</span>
<span class="t r r17 cb x105" style="right:654.7px">1.0000</span>
<span class="t r r17 cb x105" style="right:565.7px">1.0000</span>
<span class="t r r17 cb x105" style="right:476.7px">1.0000</span>
<span class="t r r17 cb x105" style="right:387.7px">1.0000</span>
<span class="t r r17 cb x105" style="right:298.7px">1.0000</span>
<span class="t r r17 cb x105" style="right:209.7px">1.0000</span>
<span class="t r r17 cb x105" style="right:120.7px">1.0000</span>
<span class="t r r17 cb x105" style="right:31.7px">1.0000</span>
<span class="t l r18 cr x101" style="left:109.6px">Land lease due</span>
<span class="t l r18 cr x89" style="left:457.5px">EUR k</span>
<span class="t r r18 cr x153" style="right:1300.8px">-</span>
<span class="t r r18 cr x105" style="right:1207.8px">13,841</span>
<span class="t r r18 cr x153" style="right:1101.0px">-</span>
<span class="t r r18 cr x105" style="right:1010.6px">477</span>
<span class="t r r18 cr x105" style="right:921.6px">477</span>
<span class="t r r18 cr x105" style="right:832.6px">477</span>
<span class="t r r18 cr x105" style="right:743.6px">477</span>
<span class="t r r18 cr x105" style="right:654.6px">477</span>
<span class="t r r18 cr x105" style="right:565.6px">477</span>
<span class="t r r18 cr x105" style="right:476.6px">477</span>
<span class="t r r18 cr x105" style="right:387.6px">477</span>
<span class="t r r18 cr x105" style="right:298.6px">477</span>
<span class="t r r18 cr x105" style="right:209.6px">477</span>
<span class="t r r18 cr x105" style="right:120.6px">477</span>
<span class="t r r18 cr x105" style="right:31.6px">477</span>
<span class="t l r20 ck b x97" style="left:79.8px">1.1.2. Insurance due</span>
<span class="t l r21 cb x100" style="left:109.6px">Fixed assets balance BEG</span>
<span class="t r r21 cb x153" style="right:1475.5px">-</span>
<span class="t l r21 cb x89" style="left:457.5px">EUR k</span>
<span class="t r r21 cb x153" style="right:1300.8px">-</span>
<span class="t r r21 cb x153" style="right:1209.8px">-</span>
<span class="t r r21 cb x153" style="right:1190.4px">-</span>
<span class="t r r21 cb x153" style="right:1101.0px">-</span>
<span class="t r r21 cb x105" style="right:1010.7px">12,250</span>
<span class="t r r21 cb x105" style="right:921.6px">11,828</span>
<span class="t r r21 cb x105" style="right:832.6px">11,405</span>
<span class="t r r21 cb x105" style="right:743.6px">10,983</span>
<span class="t r r21 cb x105" style="right:654.7px">10,560</span>
<span class="t r r21 cb x105" style="right:565.6px">10,138</span>
<span class="t r r21 cb x105" style="right:476.6px">9,716</span>
<span class="t r r21 cb x105" style="right:387.6px">9,293</span>
<span class="t r r21 cb x105" style="right:298.6px">8,871</span>
<span class="t r r21 cb x105" style="right:209.6px">8,448</span>
<span class="t r r21 cb x105" style="right:120.6px">8,026</span>
<span class="t r r21 cb x105" style="right:31.6px">7,603</span>
<span class="t l r23 ck x104" style="left:109.6px">Fixed assets balance</span>
<span class="t l r23 ck x89" style="left:457.5px">EUR k</span>
<span class="t r r23 ck x153" style="right:1101.0px">-</span>
<span class="t r r23 ck x105" style="right:1010.7px">12,250</span>
<span class="t r r23 ck x105" style="right:921.6px">11,828</span>
<span class="t r r23 ck x105" style="right:832.6px">11,405</span>
<span class="t r r23 ck x105" style="right:743.6px">10,983</span>
<span class="t r r23 ck x105" style="right:654.7px">10,560</span>
<span class="t r r23 ck x105" style="right:565.6px">10,138</span>
<span class="t r r23 ck x105" style="right:476.6px">9,716</span>
<span class="t r r23 ck x105" style="right:387.6px">9,293</span>
<span class="t r r23 ck x105" style="right:298.6px">8,871</span>
<span class="t r r23 ck x105" style="right:209.6px">8,448</span>
<span class="t r r23 ck x105" style="right:120.6px">8,026</span>
<span class="t r r23 ck x105" style="right:31.6px">7,603</span>
<div style="left:103px;top:540px;width:1791px;height:1px;background:#7f7f7f;"></div>
<div style="left:103px;top:558px;width:1791px;height:1px;background:#7f7f7f;"></div>
<span class="t l r25 ck x104" style="left:109.6px">Fixed assets balance</span>
<span class="t r r25 ck x153" style="right:1475.5px">-</span>
<span class="t l r25 ck x89" style="left:457.5px">EUR k</span>
<span class="t r r25 ck x153" style="right:1300.8px">-</span>
<span class="t r r25 ck x153" style="right:1209.8px">-</span>
<span class="t r r25 ck x153" style="right:1190.4px">-</span>
<span class="t r r25 ck x153" style="right:1101.0px">-</span>
<span class="t r r25 ck x105" style="right:1010.7px">12,250</span>
<span class="t r r25 ck x105" style="right:921.6px">11,828</span>
<span class="t r r25 ck x105" style="right:832.6px">11,405</span>
<span class="t r r25 ck x105" style="right:743.6px">10,983</span>
<span class="t r r25 ck x105" style="right:654.7px">10,560</span>
<span class="t r r25 ck x105" style="right:565.6px">10,138</span>
<span class="t r r25 ck x105" style="right:476.6px">9,716</span>
<span class="t r r25 ck x105" style="right:387.6px">9,293</span>
<span class="t r r25 ck x105" style="right:298.6px">8,871</span>
<span class="t r r25 ck x105" style="right:209.6px">8,448</span>
<span class="t r r25 ck x105" style="right:120.6px">8,026</span>
<span class="t r r25 ck x105" style="right:31.6px">7,603</span>
<span class="t l r26 cb x103" style="left:109.4px">Insurance as % of fixed assets</span>
<span class="t r r26 cb x153" style="right:1475.5px">-</span>
<span class="t l r26 cb x95" style="left:458.0px">%</span>
<span class="t r r26 cb x153" style="right:1300.8px">-</span>
<span class="t r r26 cb x153" style="right:1209.8px">-</span>
<span class="t r r26 cb x153" style="right:1190.4px">-</span>
<span class="t r r26 cb x102" style="right:1099.7px">0.15%</span>
<span class="t r r26 cb x102" style="right:1010.7px">0.15%</span>
<span class="t r r26 cb x102" style="right:921.7px">0.15%</span>
<span class="t r r26 cb x102" style="right:832.7px">0.15%</span>
<span class="t r r26 cb x102" style="right:743.7px">0.15%</span>
<span class="t r r26 cb x102" style="right:654.7px">0.15%</span>
<span class="t r r26 cb x102" style="right:565.7px">0.15%</span>
<span class="t r r26 cb x102" style="right:476.7px">0.15%</span>
<span class="t r r26 cb x102" style="right:387.7px">0.15%</span>
<span class="t r r26 cb x102" style="right:298.7px">0.15%</span>
<span class="t r r26 cb x102" style="right:209.7px">0.15%</span>
<span class="t r r26 cb x102" style="right:120.7px">0.15%</span>
<span class="t r r26 cb x102" style="right:31.7px">0.15%</span>
<span class="t l r27 cb x109" style="left:109.4px">Inflation factor - Other costs</span>
<span class="t r r27 cb x153" style="right:1475.5px">-</span>
<span class="t l r27 cb x111" style="left:458.3px">factor</span>
<span class="t r r27 cb x153" style="right:1300.8px">-</span>
<span class="t r r27 cb x153" style="right:1209.8px">-</span>
<span class="t r r27 cb x153" style="right:1190.4px">-</span>
<span class="t r r27 cb x105" style="right:1099.7px">1.0000</span>
<span class="t r r27 cb x105" style="right:1010.7px">1.0000</span>
<span class="t r r27 cb x105" style="right:921.7px">1.0000</span>
<span class="t r r27 cb x105" style="right:832.7px">1.0000</span>
<span class="t r r27 cb x105" style="right:743.7px">1.0000</span>
<span class="t r r27 cb x105" style="right:654.7px">1.0000</span>
<span class="t r r27 cb x105" style="right:565.7px">1.0000</span>
<span class="t r r27 cb x105" style="right:476.7px">1.0000</span>
<span class="t r r27 cb x105" style="right:387.7px">1.0000</span>
<span class="t r r27 cb x105" style="right:298.7px">1.0000</span>
<span class="t r r27 cb x105" style="right:209.7px">1.0000</span>
<span class="t r r27 cb x105" style="right:120.7px">1.0000</span>
<span class="t r r27 cb x105" style="right:31.7px">1.0000</span>
<span class="t l r28 cb x102" style="left:109.6px">Phase PPF (Actual / Actual) - Ops. [p7]</span>
<span class="t r r28 cb x153" style="right:1475.5px">-</span>
<span class="t l r28 cb x111" style="left:458.3px">factor</span>
<span class="t r r28 cb x153" style="right:1300.8px">-</span>
<span class="t r r28 cb x105" style="right:1208.0px">29.0000</span>
<span class="t r r28 cb x153" style="right:1190.4px">-</span>
<span class="t r r28 cb x153" style="right:1101.0px">-</span>
<span class="t r r28 cb x105" style="right:1010.7px">1.0000</span>
<span class="t r r28 cb x105" style="right:921.7px">1.0000</span>
<span class="t r r28 cb x105" style="right:832.7px">1.0000</span>
<span class="t r r28 cb x105" style="right:743.7px">1.0000</span>
<span class="t r r28 cb x105" style="right:654.7px">1.0000</span>
<span class="t r r28 cb x105" style="right:565.7px">1.0000</span>
<span class="t r r28 cb x105" style="right:476.7px">1.0000</span>
<span class="t r r28 cb x105" style="right:387.7px">1.0000</span>
<span class="t r r28 cb x105" style="right:298.7px">1.0000</span>
<span class="t r r28 cb x105" style="right:209.7px">1.0000</span>
<span class="t r r28 cb x105" style="right:120.7px">1.0000</span>
<span class="t r r28 cb x105" style="right:31.7px">1.0000</span>
<span class="t l r29 cb x107" style="left:109.5px">Forecast period flag</span>
<span class="t r r29 cb x153" style="right:1475.5px">-</span>
<span class="t l r29 cb x116" style="left:458.3px">flag</span>
<span class="t r r29 cb x105" style="right:1298.9px">1</span>
<span class="t r r29 cb x105" style="right:1208.0px">30</span>
<span class="t r r29 cb x153" style="right:1190.4px">-</span>
<span class="t r r29 cb x105" style="right:1099.6px">1</span>
<span class="t r r29 cb x105" style="right:1010.6px">1</span>
<span class="t r r29 cb x105" style="right:921.6px">1</span>
<span class="t r r29 cb x105" style="right:832.6px">1</span>
<span class="t r r29 cb x105" style="right:743.6px">1</span>
<span class="t r r29 cb x105" style="right:654.6px">1</span>
<span class="t r r29 cb x105" style="right:565.6px">1</span>
<span class="t r r29 cb x105" style="right:476.6px">1</span>
<span class="t r r29 cb x105" style="right:387.6px">1</span>
<span class="t r r29 cb x105" style="right:298.6px">1</span>
<span class="t r r29 cb x105" style="right:209.6px">1</span>
<span class="t r r29 cb x105" style="right:120.6px">1</span>
<span class="t r r29 cb x105" style="right:31.6px">1</span>
<span class="t l r30 cb x106" style="left:110.1px">Sensitivity factor - Other costs</span>
<span class="t r r30 cb x153" style="right:1475.5px">-</span>
<span class="t l r30 cb x111" style="left:458.3px">factor</span>
<span class="t r r30 cb x153" style="right:1300.8px">-</span>
<span class="t r r30 cb x153" style="right:1209.8px">-</span>
<span class="t r r30 cb x153" style="right:1190.4px">-</span>
<span class="t r r30 cb x105" style="right:1099.7px">1.0000</span>
<span class="t r r30 cb x105" style="right:1010.7px">1.0000</span>
<span class="t r r30 cb x105" style="right:921.7px">1.0000</span>
<span class="t r r30 cb x105" style="right:832.7px">1.0000</span>
<span class="t r r30 cb x105" style="right:743.7px">1.0000</span>
<span class="t r r30 cb x105" style="right:654.7px">1.0000</span>
<span class="t r r30 cb x105" style="right:565.7px">1.0000</span>
<span class="t r r30 cb x105" style="right:476.7px">1.0000</span>
<span class="t r r30 cb x105" style="right:387.7px">1.0000</span>
<span class="t r r30 cb x105" style="right:298.7px">1.0000</span>
<span class="t r r30 cb x105" style="right:209.7px">1.0000</span>
<span class="t r r30 cb x105" style="right:120.7px">1.0000</span>
<span class="t r r30 cb x105" style="right:31.7px">1.0000</span>
<span class="t l r31 cr x105" style="left:109.4px">Insurance due</span>
<span class="t l r31 cr x89" style="left:457.5px">EUR k</span>
<span class="t r r31 cr x153" style="right:1300.8px">-</span>
<span class="t r r31 cr x105" style="right:1207.8px">276</span>
<span class="t r r31 cr x153" style="right:1101.0px">-</span>
<span class="t r r31 cr x105" style="right:1010.7px">18</span>
<span class="t r r31 cr x105" style="right:921.7px">18</span>
<span class="t r r31 cr x105" style="right:832.7px">17</span>
<span class="t r r31 cr x105" style="right:743.7px">16</span>
<span class="t r r31 cr x105" style="right:654.7px">16</span>
<span class="t r r31 cr x105" style="right:565.7px">15</span>
<span class="t r r31 cr x105" style="right:476.7px">15</span>
<span class="t r r31 cr x105" style="right:387.9px">14</span>
<span class="t r r31 cr x105" style="right:298.7px">13</span>
<span class="t r r31 cr x105" style="right:209.7px">13</span>
<span class="t r r31 cr x105" style="right:120.7px">12</span>
<span class="t r r31 cr x105" style="right:31.7px">11</span>
<span class="t l r33 ck b x99" style="left:79.8px">1.1.3. Real estate tax due</span>
<span class="t l r34 cb x107" style="left:109.9px">Currency multiple value</span>
<span class="t r r34 cb x105" style="right:1473.6px">1,000</span>
<span class="t l r34 cb x116" style="left:457.5px">multiple</span>
<span class="t l r35 cb x106" style="left:109.5px">Number of turbines</span>
<span class="t r r35 cb x105" style="right:1473.4px">7</span>
<span class="t l r35 cb x110" style="left:458.3px">turbines</span>
<span class="t l r36 cb x103" style="left:109.6px">Real estate tax</span>
<span class="t r r36 cb x153" style="right:1475.5px">-</span>
<span class="t l r36 cb x103" style="left:457.4px">EUR / turbine</span>
<span class="t r r36 cb x153" style="right:1300.8px">-</span>
<span class="t r r36 cb x153" style="right:1209.8px">-</span>
<span class="t r r36 cb x153" style="right:1190.4px">-</span>
<span class="t r r36 cb x105" style="right:1099.6px">4,481.26</span>
<span class="t r r36 cb x105" style="right:1010.6px">4,481.26</span>
<span class="t r r36 cb x105" style="right:921.6px">4,481.26</span>
<span class="t r r36 cb x105" style="right:832.6px">4,481.26</span>
<span class="t r r36 cb x105" style="right:743.6px">4,481.26</span>
<span class="t r r36 cb x105" style="right:654.6px">4,481.26</span>
<span class="t r r36 cb x105" style="right:565.6px">4,481.26</span>
<span class="t r r36 cb x105" style="right:476.6px">4,481.26</span>
<span class="t r r36 cb x105" style="right:387.6px">4,481.26</span>
<span class="t r r36 cb x105" style="right:298.6px">4,481.26</span>
<span class="t r r36 cb x105" style="right:209.6px">4,481.26</span>
<span class="t r r36 cb x105" style="right:120.6px">4,481.26</span>
<span class="t r r36 cb x105" style="right:31.6px">4,481.26</span>
<span class="t l r37 cb x102" style="left:109.6px">Phase PPF (Actual / Actual) - Ops. [p7]</span>
<span class="t r r37 cb x153" style="right:1475.5px">-</span>
<span class="t l r37 cb x111" style="left:458.3px">factor</span>
<span class="t r r37 cb x153" style="right:1300.8px">-</span>
<span class="t r r37 cb x105" style="right:1208.0px">29.0000</span>
<span class="t r r37 cb x153" style="right:1190.4px">-</span>
<span class="t r r37 cb x153" style="right:1101.0px">-</span>
<span class="t r r37 cb x105" style="right:1010.7px">1.0000</span>
<span class="t r r37 cb x105" style="right:921.7px">1.0000</span>
<span class="t r r37 cb x105" style="right:832.7px">1.0000</span>
<span class="t r r37 cb x105" style="right:743.7px">1.0000</span>
<span class="t r r37 cb x105" style="right:654.7px">1.0000</span>
<span class="t r r37 cb x105" style="right:565.7px">1.0000</span>
<span class="t r r37 cb x105" style="right:476.7px">1.0000</span>
<span class="t r r37 cb x105" style="right:387.7px">1.0000</span>
<span class="t r r37 cb x105" style="right:298.7px">1.0000</span>
<span class="t r r37 cb x105" style="right:209.7px">1.0000</span>
<span class="t r r37 cb x105" style="right:120.7px">1.0000</span>
<span class="t r r37 cb x105" style="right:31.7px">1.0000</span>
<span class="t l r38 cb x107" style="left:109.5px">Forecast period flag</span>
<span class="t r r38 cb x153" style="right:1475.5px">-</span>
<span class="t l r38 cb x116" style="left:458.3px">flag</span>
<span class="t r r38 cb x105" style="right:1298.9px">1</span>
<span class="t r r38 cb x105" style="right:1208.0px">30</span>
<span class="t r r38 cb x153" style="right:1190.4px">-</span>
<span class="t r r38 cb x105" style="right:1099.6px">1</span>
<span class="t r r38 cb x105" style="right:1010.6px">1</span>
<span class="t r r38 cb x105" style="right:921.6px">1</span>
<span class="t r r38 cb x105" style="right:832.6px">1</span>
<span class="t r r38 cb x105" style="right:743.6px">1</span>
<span class="t r r38 cb x105" style="right:654.6px">1</span>
<span class="t r r38 cb x105" style="right:565.6px">1</span>
<span class="t r r38 cb x105" style="right:476.6px">1</span>
<span class="t r r38 cb x105" style="right:387.6px">1</span>
<span class="t r r38 cb x105" style="right:298.6px">1</span>
<span class="t r r38 cb x105" style="right:209.6px">1</span>
<span class="t r r38 cb x105" style="right:120.6px">1</span>
<span class="t r r38 cb x105" style="right:31.6px">1</span>
<span class="t l r39 cb x106" style="left:110.1px">Sensitivity factor - Other costs</span>
<span class="t r r39 cb x153" style="right:1475.5px">-</span>
<span class="t l r39 cb x111" style="left:458.3px">factor</span>
<span class="t r r39 cb x153" style="right:1300.8px">-</span>
<span class="t r r39 cb x153" style="right:1209.8px">-</span>
<span class="t r r39 cb x153" style="right:1190.4px">-</span>
<span class="t r r39 cb x105" style="right:1099.7px">1.0000</span>
<span class="t r r39 cb x105" style="right:1010.7px">1.0000</span>
<span class="t r r39 cb x105" style="right:921.7px">1.0000</span>
<span class="t r r39 cb x105" style="right:832.7px">1.0000</span>
<span class="t r r39 cb x105" style="right:743.7px">1.0000</span>
<span class="t r r39 cb x105" style="right:654.7px">1.0000</span>
<span class="t r r39 cb x105" style="right:565.7px">1.0000</span>
<span class="t r r39 cb x105" style="right:476.7px">1.0000</span>
<span class="t r r39 cb x105" style="right:387.7px">1.0000</span>
<span class="t r r39 cb x105" style="right:298.7px">1.0000</span>
<span class="t r r39 cb x105" style="right:209.7px">1.0000</span>
<span class="t r r39 cb x105" style="right:120.7px">1.0000</span>
<span class="t r r39 cb x105" style="right:31.7px">1.0000</span>
<span class="t l r40 cr x102" style="left:109.6px">Real estate tax due</span>
<span class="t l r40 cr x89" style="left:457.5px">EUR k</span>
<span class="t r r40 cr x153" style="right:1300.8px">-</span>
<span class="t r r40 cr x105" style="right:1207.9px">910</span>
<span class="t r r40 cr x153" style="right:1101.0px">-</span>
<span class="t r r40 cr x105" style="right:1010.7px">31</span>
<span class="t r r40 cr x105" style="right:921.7px">31</span>
<span class="t r r40 cr x105" style="right:832.7px">31</span>
<span class="t r r40 cr x105" style="right:743.7px">31</span>
<span class="t r r40 cr x105" style="right:654.7px">31</span>
<span class="t r r40 cr x105" style="right:565.7px">31</span>
<span class="t r r40 cr x105" style="right:476.7px">31</span>
<span class="t r r40 cr x105" style="right:387.7px">31</span>
<span class="t r r40 cr x105" style="right:298.7px">31</span>
<span class="t r r40 cr x105" style="right:209.7px">31</span>
<span class="t r r40 cr x105" style="right:120.7px">31</span>
<span class="t r r40 cr x105" style="right:31.7px">31</span>
<span class="t l r42 ck b x101" style="left:79.7px">1.1.4. Other opex due</span>
<span class="t l r43 cb x102" style="left:110.1px">Other opex</span>
<span class="t r r43 cb x153" style="right:1475.5px">-</span>
<span class="t l r43 cb x89" style="left:457.5px">EUR k</span>
<span class="t r r43 cb x153" style="right:1300.8px">-</span>
<span class="t r r43 cb x153" style="right:1209.8px">-</span>
<span class="t r r43 cb x153" style="right:1190.4px">-</span>
<span class="t r r43 cb x153" style="right:1101.0px">-</span>
<span class="t r r43 cb x153" style="right:1012.0px">-</span>
<span class="t r r43 cb x153" style="right:923.0px">-</span>
<span class="t r r43 cb x153" style="right:834.0px">-</span>
<span class="t r r43 cb x153" style="right:745.0px">-</span>
<span class="t r r43 cb x153" style="right:656.0px">-</span>
<span class="t r r43 cb x153" style="right:567.0px">-</span>
<span class="t r r43 cb x153" style="right:478.0px">-</span>
<span class="t r r43 cb x153" style="right:389.0px">-</span>
<span class="t r r43 cb x153" style="right:300.0px">-</span>
<span class="t r r43 cb x153" style="right:211.0px">-</span>
<span class="t r r43 cb x153" style="right:122.0px">-</span>
<span class="t r r43 cb x153" style="right:33.0px">-</span>
<span class="t l r44 cb x102" style="left:109.6px">Phase PPF (Actual / Actual) - Ops. [p7]</span>
<span class="t r r44 cb x153" style="right:1475.5px">-</span>
<span class="t l r44 cb x111" style="left:458.3px">factor</span>
<span class="t r r44 cb x153" style="right:1300.8px">-</span>
<span class="t r r44 cb x105" style="right:1208.0px">29.0000</span>
<span class="t r r44 cb x153" style="right:1190.4px">-</span>
<span class="t r r44 cb x153" style="right:1101.0px">-</span>
<span class="t r r44 cb x105" style="right:1010.7px">1.0000</span>
<span class="t r r44 cb x105" style="right:921.7px">1.0000</span>
<span class="t r r44 cb x105" style="right:832.7px">1.0000</span>
<span class="t r r44 cb x105" style="right:743.7px">1.0000</span>
<span class="t r r44 cb x105" style="right:654.7px">1.0000</span>
<span class="t r r44 cb x105" style="right:565.7px">1.0000</span>
<span class="t r r44 cb x105" style="right:476.7px">1.0000</span>
<span class="t r r44 cb x105" style="right:387.7px">1.0000</span>
<span class="t r r44 cb x105" style="right:298.7px">1.0000</span>
<span class="t r r44 cb x105" style="right:209.7px">1.0000</span>
<span class="t r r44 cb x105" style="right:120.7px">1.0000</span>
<span class="t r r44 cb x105" style="right:31.7px">1.0000</span>
<span class="t l r45 cb x107" style="left:109.5px">Forecast period flag</span>
<span class="t r r45 cb x153" style="right:1475.5px">-</span>
<span class="t l r45 cb x116" style="left:458.3px">flag</span>
<span class="t r r45 cb x105" style="right:1298.9px">1</span>
<span class="t r r45 cb x105" style="right:1208.0px">30</span>
<span class="t r r45 cb x153" style="right:1190.4px">-</span>
<span class="t r r45 cb x105" style="right:1099.6px">1</span>
<span class="t r r45 cb x105" style="right:1010.6px">1</span>
<span class="t r r45 cb x105" style="right:921.6px">1</span>
<span class="t r r45 cb x105" style="right:832.6px">1</span>
<span class="t r r45 cb x105" style="right:743.6px">1</span>
<span class="t r r45 cb x105" style="right:654.6px">1</span>
<span class="t r r45 cb x105" style="right:565.6px">1</span>
<span class="t r r45 cb x105" style="right:476.6px">1</span>
<span class="t r r45 cb x105" style="right:387.6px">1</span>
<span class="t r r45 cb x105" style="right:298.6px">1</span>
<span class="t r r45 cb x105" style="right:209.6px">1</span>
<span class="t r r45 cb x105" style="right:120.6px">1</span>
<span class="t r r45 cb x105" style="right:31.6px">1</span>
<span class="t l r46 cb x106" style="left:110.1px">Sensitivity factor - Other costs</span>
<span class="t r r46 cb x153" style="right:1475.5px">-</span>
<span class="t l r46 cb x111" style="left:458.3px">factor</span>
<span class="t r r46 cb x153" style="right:1300.8px">-</span>
<span class="t r r46 cb x153" style="right:1209.8px">-</span>
<span class="t r r46 cb x153" style="right:1190.4px">-</span>
<span class="t r r46 cb x105" style="right:1099.7px">1.0000</span>
<span class="t r r46 cb x105" style="right:1010.7px">1.0000</span>
<span class="t r r46 cb x105" style="right:921.7px">1.0000</span>
<span class="t r r46 cb x105" style="right:832.7px">1.0000</span>
<span class="t r r46 cb x105" style="right:743.7px">1.0000</span>
<span class="t r r46 cb x105" style="right:654.7px">1.0000</span>
<span class="t r r46 cb x105" style="right:565.7px">1.0000</span>
<span class="t r r46 cb x105" style="right:476.7px">1.0000</span>
<span class="t r r46 cb x105" style="right:387.7px">1.0000</span>
<span class="t r r46 cb x105" style="right:298.7px">1.0000</span>
<span class="t r r46 cb x105" style="right:209.7px">1.0000</span>
<span class="t r r46 cb x105" style="right:120.7px">1.0000</span>
<span class="t r r46 cb x105" style="right:31.7px">1.0000</span>
<span class="t l r47 cr x103" style="left:110.1px">Other opex due</span>
<span class="t l r47 cr x89" style="left:457.5px">EUR k</span>
<span class="t r r47 cr x153" style="right:1300.8px">-</span>
<span class="t r r47 cr x153" style="right:1209.8px">-</span>
<span class="t r r47 cr x153" style="right:1101.0px">-</span>
<span class="t r r47 cr x153" style="right:1012.0px">-</span>
<span class="t r r47 cr x153" style="right:923.0px">-</span>
<span class="t r r47 cr x153" style="right:834.0px">-</span>
<span class="t r r47 cr x153" style="right:745.0px">-</span>
<span class="t r r47 cr x153" style="right:656.0px">-</span>
<span class="t r r47 cr x153" style="right:567.0px">-</span>
<span class="t r r47 cr x153" style="right:478.0px">-</span>
<span class="t r r47 cr x153" style="right:389.0px">-</span>
<span class="t r r47 cr x153" style="right:300.0px">-</span>
<span class="t r r47 cr x153" style="right:211.0px">-</span>
<span class="t r r47 cr x153" style="right:122.0px">-</span>
<span class="t r r47 cr x153" style="right:33.0px">-</span>
<span class="t l r49 ck b x99" style="left:79.8px">1.1.5. Summary</span>
<span class="t l r50 ck x101" style="left:109.6px">Land lease due</span>
<span class="t r r50 ck x153" style="right:1475.5px">-</span>
<span class="t l r50 ck x89" style="left:457.5px">EUR k</span>
<span class="t r r50 ck x153" style="right:1300.8px">-</span>
<span class="t r r50 ck x105" style="right:1207.8px">13,841</span>
<span class="t r r50 ck x153" style="right:1190.4px">-</span>
<span class="t r r50 ck x153" style="right:1101.0px">-</span>
<span class="t r r50 ck x105" style="right:1010.6px">477</span>
<span class="t r r50 ck x105" style="right:921.6px">477</span>
<span class="t r r50 ck x105" style="right:832.6px">477</span>
<span class="t r r50 ck x105" style="right:743.6px">477</span>
<span class="t r r50 ck x105" style="right:654.6px">477</span>
<span class="t r r50 ck x105" style="right:565.6px">477</span>
<span class="t r r50 ck x105" style="right:476.6px">477</span>
<span class="t r r50 ck x105" style="right:387.6px">477</span>
<span class="t r r50 ck x105" style="right:298.6px">477</span>
<span class="t r r50 ck x105" style="right:209.6px">477</span>
<span class="t r r50 ck x105" style="right:120.6px">477</span>
<span class="t r r50 ck x105" style="right:31.6px">477</span>
<div style="left:361px;top:181px;width:92px;height:19px;border:1px dotted #fff;box-sizing:border-box"></div>
<div style="left:361px;top:199px;width:92px;height:19px;border:1px dotted #fff;box-sizing:border-box"></div>
<div style="left:361px;top:217px;width:92px;height:19px;border:1px dotted #fff;box-sizing:border-box"></div>
<div style="left:103px;top:780px;width:260px;height:20px;border:2px solid #1f7145;box-sizing:border-box"></div>
<div style="left:358px;top:795px;width:7px;height:7px;background:#1f7145;border:1px solid #fff;box-sizing:border-box"></div>
<div style="left:737px;top:156px;width:1px;height:867px;background:#a0a0a0;"></div>
<div style="left:737px;top:156px;width:1px;height:115px;background:#9ab8cc;"></div>
<div style="left:737px;top:289px;width:1px;height:19px;background:#9ab8cc;"></div>
<div style="left:0px;top:271px;width:1894px;height:1px;background:#9c9c9c;"></div>
<div style="left:0;top:1024px;width:1920px;height:28px;background:#e6e6e6"></div>
<div style="left:0;top:1023px;width:1895px;height:1px;background:#a0a0a0"></div>
<div style="left:0;top:1052px;width:1920px;height:1px;background:#cfcfcf"></div>
<div style="left:0;top:1053px;width:1920px;height:27px;background:#f3f2f1"></div>
<div style="left:1895px;top:137px;width:25px;height:887px;background:#e6e6e6"></div>
<div style="left:1894px;top:272px;width:1px;height:751px;background:#a6a6a6"></div>
<div style="left:1898px;top:157px;width:19px;height:848px;background:#dcdcdc"></div>
<div style="left:1898px;top:157px;width:19px;height:460px;background:#fff;border:1px solid #ababab;box-sizing:border-box"></div>
<div style="left:1898px;top:138px;width:19px;height:19px;background:#fff;border:1px solid #ababab;box-sizing:border-box"></div>
<div style="left:1898px;top:1004px;width:19px;height:19px;background:#fff;border:1px solid #ababab;box-sizing:border-box"></div>
<svg style="left:1898px;top:138px" width="19" height="19" viewBox="0 0 19 19"><path d="M5 11l4.600-5.200L14.200 11z" fill="#606060"/></svg>
<svg style="left:1898px;top:1004px" width="19" height="19" viewBox="0 0 19 19"><path d="M4.900 8l4.700 5 4.700-5z" fill="#606060"/></svg>
<svg style="left:27px;top:1031px" width="8" height="12" viewBox="0 0 8 12"><path d="M6.3 1.5v9.400L.6 6.200z" fill="#0e6b3c"/></svg>
<svg style="left:56px;top:1031px" width="8" height="12" viewBox="0 0 8 12"><path d="M.8 1.5v9.400l5.700-4.700z" fill="#0e6b3c"/></svg>
<span class="ui" style="left:80.6px;top:1024px;height:24px;line-height:24px;font-size:17px;font-weight:bold;letter-spacing:.45px;color:#0e6b3c">...</span>
<div style="left:105.7px;top:1026px;width:77.1px;height:22.5px;background:linear-gradient(#ffffe4,#ffffc4 55%)"></div>
<div style="left:102.9px;top:1027.3px;width:1.3px;height:20.3px;background:#a0a0a0"></div>
<span class="ui" style="left:116.6px;top:1023.1px;height:22.8px;line-height:22.8px;font-size:15.2px;color:#262626;transform:scaleX(1.1);">Actuals</span>
<div style="left:187.5px;top:1026px;width:103.8px;height:22.5px;background:linear-gradient(#ffffe4,#ffffc4 55%)"></div>
<div style="left:184.7px;top:1027.3px;width:1.3px;height:20.3px;background:#a0a0a0"></div>
<span class="ui" style="left:197.58px;top:1023.1px;height:22.8px;line-height:22.8px;font-size:15.2px;color:#262626;transform:scaleX(1.088);">Scenario C</span>
<div style="left:295.6px;top:1026px;width:102.8px;height:22.5px;background:linear-gradient(#ffffe4,#ffffc4 55%)"></div>
<div style="left:292.8px;top:1027.3px;width:1.3px;height:20.3px;background:#a0a0a0"></div>
<span class="ui" style="left:306.39px;top:1023.1px;height:22.8px;line-height:22.8px;font-size:15.2px;color:#262626;transform:scaleX(1.078);">Scenario S</span>
<div style="left:403px;top:1026px;width:102.4px;height:22.5px;background:linear-gradient(#ffffe4,#ffffc4 55%)"></div>
<div style="left:400.2px;top:1027.3px;width:1.3px;height:20.3px;background:#a0a0a0"></div>
<span class="ui" style="left:415.48px;top:1023.1px;height:22.8px;line-height:22.8px;font-size:15.2px;color:#262626;transform:scaleX(1.097);">Sensitivity</span>
<div style="left:509.6px;top:1026px;width:82.2px;height:22.5px;background:#bfbfbf"></div>
<div style="left:506.8px;top:1027.3px;width:1.3px;height:20.3px;background:#a0a0a0"></div>
<span class="ui" style="left:519.65px;top:1023.1px;height:22.8px;line-height:22.8px;font-size:15.2px;color:#262626;transform:scaleX(1.128);">Convert</span>
<div style="left:596.6px;top:1026px;width:61.6px;height:22.5px;background:#bfbfbf"></div>
<div style="left:593.8px;top:1027.3px;width:1.3px;height:20.3px;background:#a0a0a0"></div>
<span class="ui" style="left:606.3px;top:1023.1px;height:22.8px;line-height:22.8px;font-size:15.2px;color:#262626;transform:scaleX(1.037);">Flags</span>
<div style="left:662px;top:1026px;width:97.5px;height:22.5px;background:#bfbfbf"></div>
<div style="left:659.2px;top:1027.3px;width:1.3px;height:20.3px;background:#a0a0a0"></div>
<span class="ui" style="left:671.12px;top:1023.1px;height:22.8px;line-height:22.8px;font-size:15.2px;color:#262626;transform:scaleX(1.105);">Escalation</span>
<div style="left:764.6px;top:1026px;width:81.1px;height:22.5px;background:#bfbfbf"></div>
<div style="left:761.8px;top:1027.3px;width:1.3px;height:20.3px;background:#a0a0a0"></div>
<span class="ui" style="left:774.65px;top:1023.1px;height:22.8px;line-height:22.8px;font-size:15.2px;color:#262626;transform:scaleX(1.178);">Volume</span>
<div style="left:849.5px;top:1026px;width:86.2px;height:22.5px;background:#bfbfbf"></div>
<div style="left:846.7px;top:1027.3px;width:1.3px;height:20.3px;background:#a0a0a0"></div>
<span class="ui" style="left:858.63px;top:1023.1px;height:22.8px;line-height:22.8px;font-size:15.2px;color:#262626;transform:scaleX(1.093);">Revenue</span>
<div style="left:940.5px;top:1026px;width:61.9px;height:22.5px;background:#bfbfbf"></div>
<div style="left:937.7px;top:1027.3px;width:1.3px;height:20.3px;background:#a0a0a0"></div>
<span class="ui" style="left:949.19px;top:1023.1px;height:22.8px;line-height:22.8px;font-size:15.2px;color:#262626;transform:scaleX(1.076);">Costs</span>
<div style="left:1004.3px;top:1024px;width:66.4px;height:24px;background:#fff"></div>
<div style="left:1004.3px;top:1047px;width:66.4px;height:2px;background:#217346"></div>
<span class="ui" style="left:1016.01px;top:1023.1px;height:22.8px;line-height:22.8px;font-size:15.2px;font-weight:bold;color:#217346;transform:scaleX(1.109);">Opex</span>
<div style="left:1072.500px;top:1027px;width:3px;height:21px;background:#ababab"></div>
<span class="ui" style="left:1083.8px;top:1024px;height:24px;line-height:24px;font-size:17px;font-weight:bold;letter-spacing:.45px;color:#0e6b3c">...</span>
<svg style="left:1111px;top:1028px" width="20" height="20" viewBox="0 0 20 20" fill="none" stroke="#6a6a6a" stroke-width="1.200"><circle cx="10" cy="10" r="8.500"/><path d="M10 5.500v9M5.500 10h9"/></svg>
<div style="left:1149px;top:1031px;width:2.500px;height:2.500px;background:#a6a6a6"></div>
<div style="left:1149px;top:1036px;width:2.500px;height:2.500px;background:#a6a6a6"></div>
<div style="left:1149px;top:1041px;width:2.500px;height:2.500px;background:#a6a6a6"></div>
<div style="left:1168px;top:1028px;width:725px;height:19px;background:#dcdcdc"></div>
<div style="left:1168px;top:1028px;width:18px;height:19px;background:#fff;border:1px solid #ababab;box-sizing:border-box"></div>
<div style="left:1874.5px;top:1028px;width:18.5px;height:19px;background:#fff;border:1px solid #ababab;box-sizing:border-box"></div>
<div style="left:1186px;top:1028px;width:323px;height:19px;background:#fff;border:1px solid #ababab;box-sizing:border-box"></div>
<svg style="left:1168px;top:1028px" width="18" height="19" viewBox="0 0 18 19"><path d="M11.500 4.800v9.400L6.500 9.500z" fill="#606060"/></svg>
<svg style="left:1874.5px;top:1028px" width="18" height="19" viewBox="0 0 18 19"><path d="M7.500 4.800v9.400l5-4.700z" fill="#606060"/></svg>
<span class="ui" style="left:8.37px;top:1058.05px;height:18.5px;line-height:18.5px;font-size:12.3px;color:#5a5a5a;transform:scaleX(1.026);">Ready</span>
<svg style="left:69px;top:1057px" width="22" height="20" viewBox="0 0 22 20" fill="none" stroke="#444" stroke-width="1.300"><path d="M11 14.500H1.500v-12h16v4"/><path d="M1.500 5.500h16M4 8.500h2.500M4 11.500h2.500M8 8.500h3"/><circle cx="14" cy="13" r="5"/><circle cx="14" cy="13" r="2" fill="#444"/></svg>
<div style="left:1555px;top:1053px;width:50px;height:25px;background:#c8c6c4"></div>
<svg style="left:1570px;top:1056.500px" width="19" height="18" viewBox="0 0 19 18" fill="none" stroke="#555" stroke-width="1.800"><rect x="1.700" y="1.700" width="15.200" height="14.600"/><path d="M1.700 6.600h15.200M1.700 11.400h15.200M6.800 1.700v14.600M11.800 1.700v14.600"/></svg>
<svg style="left:1620.500px;top:1056.500px" width="19" height="18" viewBox="0 0 19 18" fill="none" stroke="#555" stroke-width="1.500"><rect x="1.500" y="1.500" width="16" height="15"/><rect x="5" y="4.800" width="9" height="8.400" stroke-width="1.300"/><path d="M7 7.700h5M7 10.300h5" stroke-width="1.200"/></svg>
<svg style="left:1670.500px;top:1056.500px" width="19" height="18" viewBox="0 0 19 18" fill="none" stroke="#555" stroke-width="1.500"><rect x="1.500" y="1.500" width="16" height="15"/><path d="M1.500 9.800h11M6.800 1.500v8.300M12.300 1.500v8.300"/></svg>
<div style="left:1712.2px;top:1064.5px;width:8.8px;height:1.2px;background:#444"></div>
<div style="left:1728.2px;top:1066px;width:124.3px;height:1px;background:#8a8a8a"></div>
<div style="left:1775px;top:1059.2px;width:5.8px;height:13.5px;background:#6a6a6a"></div>
<div style="left:1789.8px;top:1063px;width:1px;height:7px;background:#8a8a8a"></div>
<div style="left:1859.2px;top:1064.9px;width:8.8px;height:1.2px;background:#444"></div>
<div style="left:1863px;top:1061.1px;width:1.2px;height:8.8px;background:#444"></div>
<span class="ui" style="left:1884.97px;top:1058.45px;height:17.7px;line-height:17.7px;font-size:11.8px;color:#5a5a5a;transform:scaleX(1.052);">80%</span>
<div style="left:0;top:1078px;width:1920px;height:2px;background:#3a3a3a"></div>
<div style="left:60px;top:1078px;width:430px;height:2px;background:#d0d0d0"></div>
<div style="left:863px;top:1078px;width:62px;height:2px;background:#8a8a8a"></div>
</body></html>
